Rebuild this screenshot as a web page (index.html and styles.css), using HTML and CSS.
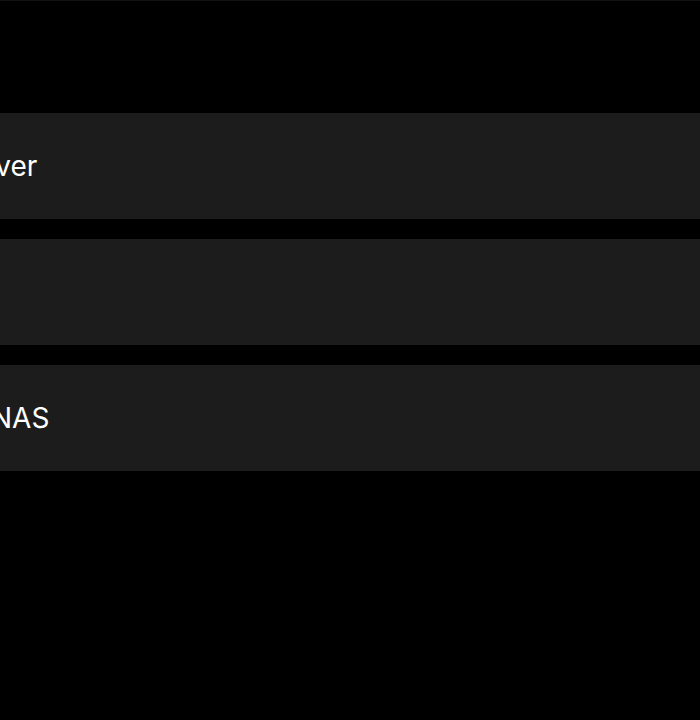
FILE: index.html
```html
<!DOCTYPE html>
<html>
<head>
<meta charset="utf-8">
<link rel="stylesheet" href="styles.css">
</head>
<body>
<div class="topline"></div>
<div class="list">
  <div class="row"><span class="label label-a">Server</span></div>
  <div class="row"></div>
  <div class="row"><span class="label label-c">NAS</span></div>
</div>
</body>
</html>
```
FILE: styles.css
```css
html, body {
  margin: 0;
  padding: 0;
  background: #000;
  width: 700px;
  height: 720px;
  overflow: hidden;
}
.topline {
  height: 1px;
  background: #111;
}
.list {
  display: flex;
  flex-direction: column;
  gap: 20px;
  padding-top: 112px;
}
.row {
  height: 106px;
  background: #1c1c1c;
  display: flex;
  align-items: center;
  font-family: "Inter", "Liberation Sans", sans-serif;
  font-size: 28px;
  color: #fff;
  white-space: nowrap;
}
.label-a {
  margin-left: -50px;
}
.label-c {
  margin-left: -9px;
}
```
